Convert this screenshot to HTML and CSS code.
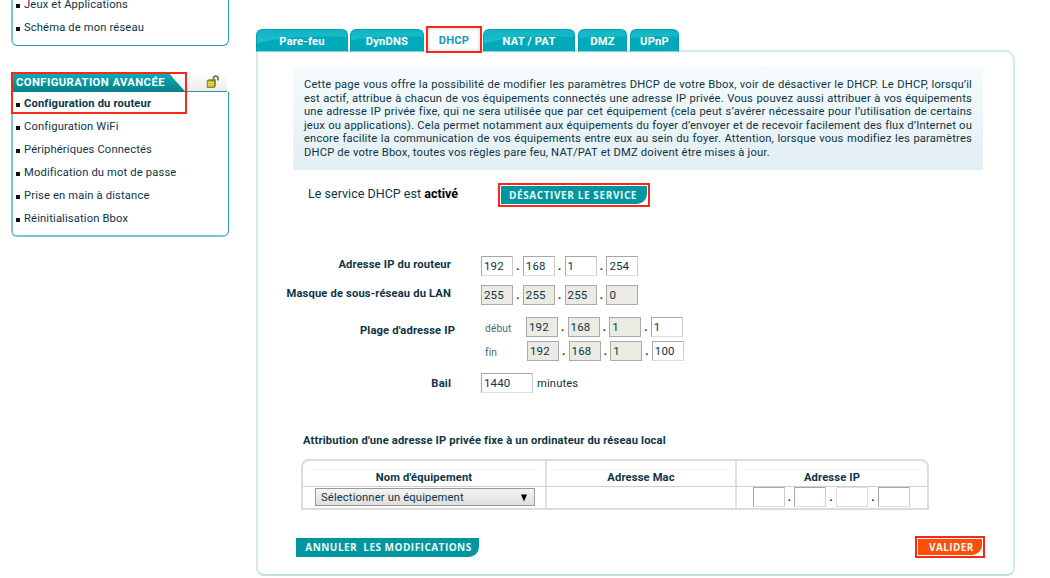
FILE: index.html
```html
<!DOCTYPE html>
<html lang="fr">
<head>
<meta charset="utf-8">
<title>Bbox - DHCP</title>
<link rel="stylesheet" href="styles.css">
</head>
<body>
<div class="page">
  <aside class="sidebar">
    <ul class="menu menu-first">
      <li>Jeux et Applications</li>
      <li>Schéma de mon réseau</li>
    </ul>
    <section class="advanced">
      <header class="menu-head">
        <svg class="menu-shape" width="176" height="20" viewBox="0 0 176 20">
          <defs><linearGradient id="head" x1="0" y1="0" x2="0" y2="1"><stop offset="0" stop-color="#08b0bd"/><stop offset="1" stop-color="#068089"/></linearGradient></defs>
          <path d="M0 0H154Q159 1 162 6L171 16Q173 19 176 20H0Z" fill="url(#head)"/>
        </svg>
        <h2>CONFIGURATION AVANCÉE</h2>
        <svg class="lock" width="14" height="14" viewBox="0 0 14 14">
          <path d="M7.5 6V3.2Q7.6 1.2 9.7 1.2Q12 1.2 12 3.2V5.6" fill="none" stroke="#77734a" stroke-width="1.7"/>
          <path d="M1.2 5.2L3 4.2H9.8V11L8.6 12.4H1.2Z" fill="#8b871e"/>
          <path d="M1.2 5.5H8.6V12.4H1.2Z" fill="#c9c02d" stroke="#706b19" stroke-width=".7"/>
          <path d="M2 7.5H8M2 9.5H8" stroke="#e9e37b" stroke-width=".7"/>
        </svg>
      </header>
      <ul class="menu">
        <li class="current">Configuration du routeur</li>
        <li>Configuration WiFi</li>
        <li>Périphériques Connectés</li>
        <li>Modification du mot de passe</li>
        <li>Prise en main à distance</li>
        <li>Réinitialisation Bbox</li>
      </ul>
      <span class="highlight"></span>
    </section>
  </aside>

  <main class="main">
    <nav class="tabs">
      <span class="tab w92 first">Pare-feu</span>
      <span class="tab w75">DynDNS</span>
      <span class="tab active">DHCP</span>
      <span class="tab w92">NAT / PAT</span>
      <span class="tab w49">DMZ</span>
      <span class="tab w49">UPnP</span>
    </nav>
    <div class="panel">
      <div class="info">
        <p>Cette page vous offre la possibilité de modifier les paramètres DHCP de votre Bbox, voir de désactiver le DHCP. Le DHCP, lorsqu’il</p>
        <p>est actif, attribue à chacun de vos équipements connectés une adresse IP privée. Vous pouvez aussi attribuer à vos équipements</p>
        <p>une adresse IP privée fixe, qui ne sera utilisée que par cet équipement (cela peut s’avérer nécessaire pour l’utilisation de certains</p>
        <p>jeux ou applications). Cela permet notamment aux équipements du foyer d’envoyer et de recevoir facilement des flux d’Internet ou</p>
        <p>encore facilite la communication de vos équipements entre eux au sein du foyer. Attention, lorsque vous modifiez les paramètres</p>
        <p class="last">DHCP de votre Bbox, toutes vos règles pare feu, NAT/PAT et DMZ doivent être mises à jour.</p>
      </div>

      <div class="service">
        <span class="status">Le service DHCP est <b>activé</b></span>
        <span class="frame frame-service"><span class="btn">DÉSACTIVER LE SERVICE</span></span>
      </div>

      <div class="form">
        <div class="row router">
          <label>Adresse IP du routeur</label>
          <div class="ip"><span class="field">192</span><i>.</i><span class="field">168</span><i>.</i><span class="field">1</span><i>.</i><span class="field">254</span></div>
        </div>
        <div class="row mask">
          <label>Masque de sous-réseau du LAN</label>
          <div class="ip"><span class="field off">255</span><i>.</i><span class="field off">255</span><i>.</i><span class="field off">255</span><i>.</i><span class="field off">0</span></div>
        </div>
        <div class="row range">
          <label>Plage d'adresse IP</label>
          <div class="bounds">
            <div class="bound"><span class="hint">début</span><div class="ip"><span class="field off">192</span><i>.</i><span class="field off">168</span><i>.</i><span class="field off">1</span><i>.</i><span class="field">1</span></div></div>
            <div class="bound end"><span class="hint">fin</span><div class="ip"><span class="field off">192</span><i>.</i><span class="field off">168</span><i>.</i><span class="field off">1</span><i>.</i><span class="field">100</span></div></div>
          </div>
        </div>
        <div class="row lease">
          <label>Bail</label>
          <div class="ip"><span class="field wide">1440</span><span class="unit">minutes</span></div>
        </div>
      </div>

      <h3>Attribution d'une adresse IP privée fixe à un ordinateur du réseau local</h3>

      <div class="grid">
        <div class="cell th"><span>Nom d'équipement</span></div>
        <div class="cell th"><span>Adresse Mac</span></div>
        <div class="cell th"><span>Adresse IP</span></div>
        <div class="cell td"><span class="select">Sélectionner un équipement<svg width="8" height="8" viewBox="0 0 8 8"><path d="M1 .5H7L4 7.5Z" fill="#000"/></svg></span></div>
        <div class="cell td"></div>
        <div class="cell td ipcell"><div class="ip"><span class="field"></span><i>.</i><span class="field"></span><i>.</i><span class="field pale"></span><i>.</i><span class="field"></span></div></div>
      </div>

      <div class="actions">
        <span class="btn btn-cancel">ANNULER&nbsp; LES MODIFICATIONS</span>
        <span class="frame frame-ok"><span class="btn btn-ok">VALIDER</span></span>
      </div>
    </div>
  </main>
</div>
</body>
</html>
```
FILE: styles.css
```css
* { box-sizing: border-box; margin: 0; padding: 0; }
body {
  width: 1050px; height: 578px; overflow: hidden; background: #fff;
  font: 11.2px/14px Roboto, "Liberation Sans", sans-serif; color: #0d3548;
  letter-spacing: .15px; white-space: nowrap;
}
.page { display: flex; height: 578px; padding-left: 11px; gap: 27px; }
.sidebar { width: 218px; flex: none; }
.menu {
  list-style: none; border: 2px solid #7cc6ca; border-right: 1px solid #2ba0a7; border-top: 0;
  border-radius: 0 0 6px 6px; padding: 0 0 6px 3px;
}
.menu-first { height: 46px; border-bottom: 1px solid #2a989f; }
.menu li { height: 23px; line-height: 23px; display: flex; align-items: center; gap: 4px; }
.menu li::before { content: ""; width: 4px; height: 4px; background: #111; margin-top: 3px; }
.menu-first li:nth-child(2) { line-height: 24px; }
.menu-first li:first-child { height: 16px; line-height: 9px; align-items: flex-start; }
.menu-first li:first-child::before { margin-top: 4px; }
.advanced { position: relative; margin-top: 26px; }
.menu-head {
  height: 20px; display: flex; align-items: center; border-bottom: 1px solid #2b969d;
  background: linear-gradient(#fff, #ececec); margin-right: 2px; position: relative;
}
.menu-shape { position: absolute; left: 0; top: 0; }
.menu-head h2 { position: relative; flex: 1; padding: 2px 0 0 5px; font-size: 11.2px; line-height: 20px; color: #fff; letter-spacing: .46px; }
.lock { margin-right: 7px; }
.advanced .menu { height: 145px; }
.advanced .menu li { line-height: 22px; }
.advanced .menu li::before { margin-top: 2px; }
.current { font-weight: bold; }
.highlight { position: absolute; left: 0; top: 0; width: 176px; height: 42px; border: 2px solid #f5281a; }

.main { width: 759px; padding-top: 26px; flex: none; }
.tabs { display: flex; align-items: flex-start; height: 24px; position: relative; z-index: 1; }
.tab {
  height: 23px; margin: 3px 2px 0 0; border-radius: 6px 6px 0 0; border: 1px solid #079fad; border-bottom-color: #8bd0d5;
  background: radial-gradient(ellipse 80px 15px at 75% 100%, #00aaba 95%, transparent 100%), linear-gradient(#10b5c3, #25c5d1);
  color: #fff; font-weight: bold; line-height: 24px; text-align: center; letter-spacing: .2px;
}
.w92 { width: 92px; }
.w75 { width: 74px; }
.w49 { width: 49px; margin-left: 1px; }
.tab.active {
  width: 56px; height: 27px; margin: 0 1px 0 0; border: 2px solid #f5281a; border-radius: 0;
  background: #fff; color: #119eaf; line-height: 25px; box-shadow: inset 0 0 4px #c8d4d6;
}
.panel { height: 526px; border: 2px solid #d3eaec; border-bottom-color: #bde0e2; border-radius: 0 10px 8px 8px; padding: 15px 0 0 36px; }
.info { width: 690px; height: 103px; margin-left: -1px; padding: 11px 11px 0; background: linear-gradient(#f5fbfc, #e3eff3); }
.info p { height: 13.6px; line-height: 13.6px; text-align: justify; text-align-last: justify; letter-spacing: .18px; white-space: normal; }
.info .last { text-align-last: left; white-space: nowrap; }

.service { display: flex; height: 24px; margin-top: 13px; padding-left: 14px; }
.status { width: 190px; font-size: 12.5px; line-height: 22px; letter-spacing: .02px; }
.status b { color: #000; }
.frame { display: flex; border: 2px solid #f5281a; padding: 1px; }
.frame-service { width: 152px; }
.btn {
  flex: 1; background: #00969f; color: #e9f8f8; font: bold 10px/19px "Open Sans", "Noto Sans", sans-serif;
  letter-spacing: .6px; border-radius: 0 0 10px 0; text-align: center;
}
.frame-service .btn { padding-right: 2px; }

.form { padding-top: 49px; height: 187px; margin-bottom: 40px; }
.row { display: flex; }
.row label { width: 167px; margin: 0 30px 0 -10px; text-align: right; font-weight: bold; }
.router label { padding-top: 2px; }
.mask label { padding-top: 2px; }
.ip { display: flex; }
.field {
  width: 32px; height: 20px; padding-left: 2px; font-size: 11.5px; line-height: 18px;
  border: 1px solid #a7a7a7; border-right-color: #ccc; border-bottom-color: #ddd; background: #fff;
}
.field.off { background: #ebebe4; border-color: #aaa; }
.field.pale { border-color: #ddd; }
.field.wide { width: 52px; }
.ip i { width: 9.8px; line-height: 22px; font-style: normal; font-weight: bold; text-align: center; color: #222; }
.router { height: 29px; }
.mask { height: 32px; }
.range { height: 56px; }
.range label { width: 171px; margin-right: 29px; padding-top: 7px; }
.bound { display: flex; height: 24px; }
.bound.end .ip { padding-left: 1px; }
.bound .ip i { width: 9.6px; }
.hint { width: 42px; padding-left: 1px; font-size: 10.2px; line-height: 23px; color: #4a6878; }
.lease label { padding-top: 4px; }
.unit { padding-left: 4px; line-height: 22px; }
h3 { font-size: 11.2px; line-height: 14px; padding-left: 9px; letter-spacing: .145px; }

.grid {
  display: grid; grid-template-columns: 242px 190px 192px; grid-template-rows: 26px 21px;
  width: 628px; height: 51px; margin: 11px 0 0 7px; border: 2px solid #dcdcdc; border-radius: 8px 8px 0 0;
}
.cell + .cell { border-left: 2px solid #e0e0e0; }
.cell:nth-child(4) { border-left: 0; }
.th { border-bottom: 1px solid #d0d0d0; text-align: center; font-weight: bold; padding: 8px 7px 0; }
.th span { display: block; border-top: 1px solid #f1f1f1; line-height: 16px; }
.td { padding: 1px 0 0 12px; }
.ipcell { padding: 0 0 0 15.5px; }
.select {
  display: flex; align-items: center; justify-content: space-between; width: 220px; height: 18px; padding: 1px 6px 0 5px;
  border: 1px solid #999; background: linear-gradient(#f4f4f4, #dedede);
}
.actions { display: flex; justify-content: space-between; align-items: center; height: 22px; margin-top: 26px; padding: 0 28px 0 2px; }
.btn-cancel { flex: none; width: 183px; height: 19px; letter-spacing: .48px; padding-left: 2px; }
.frame-ok { width: 70px; height: 22px; }
.btn-ok { background: #ff4e08; line-height: 17px; letter-spacing: .4px; padding-left: 3px; }
```
